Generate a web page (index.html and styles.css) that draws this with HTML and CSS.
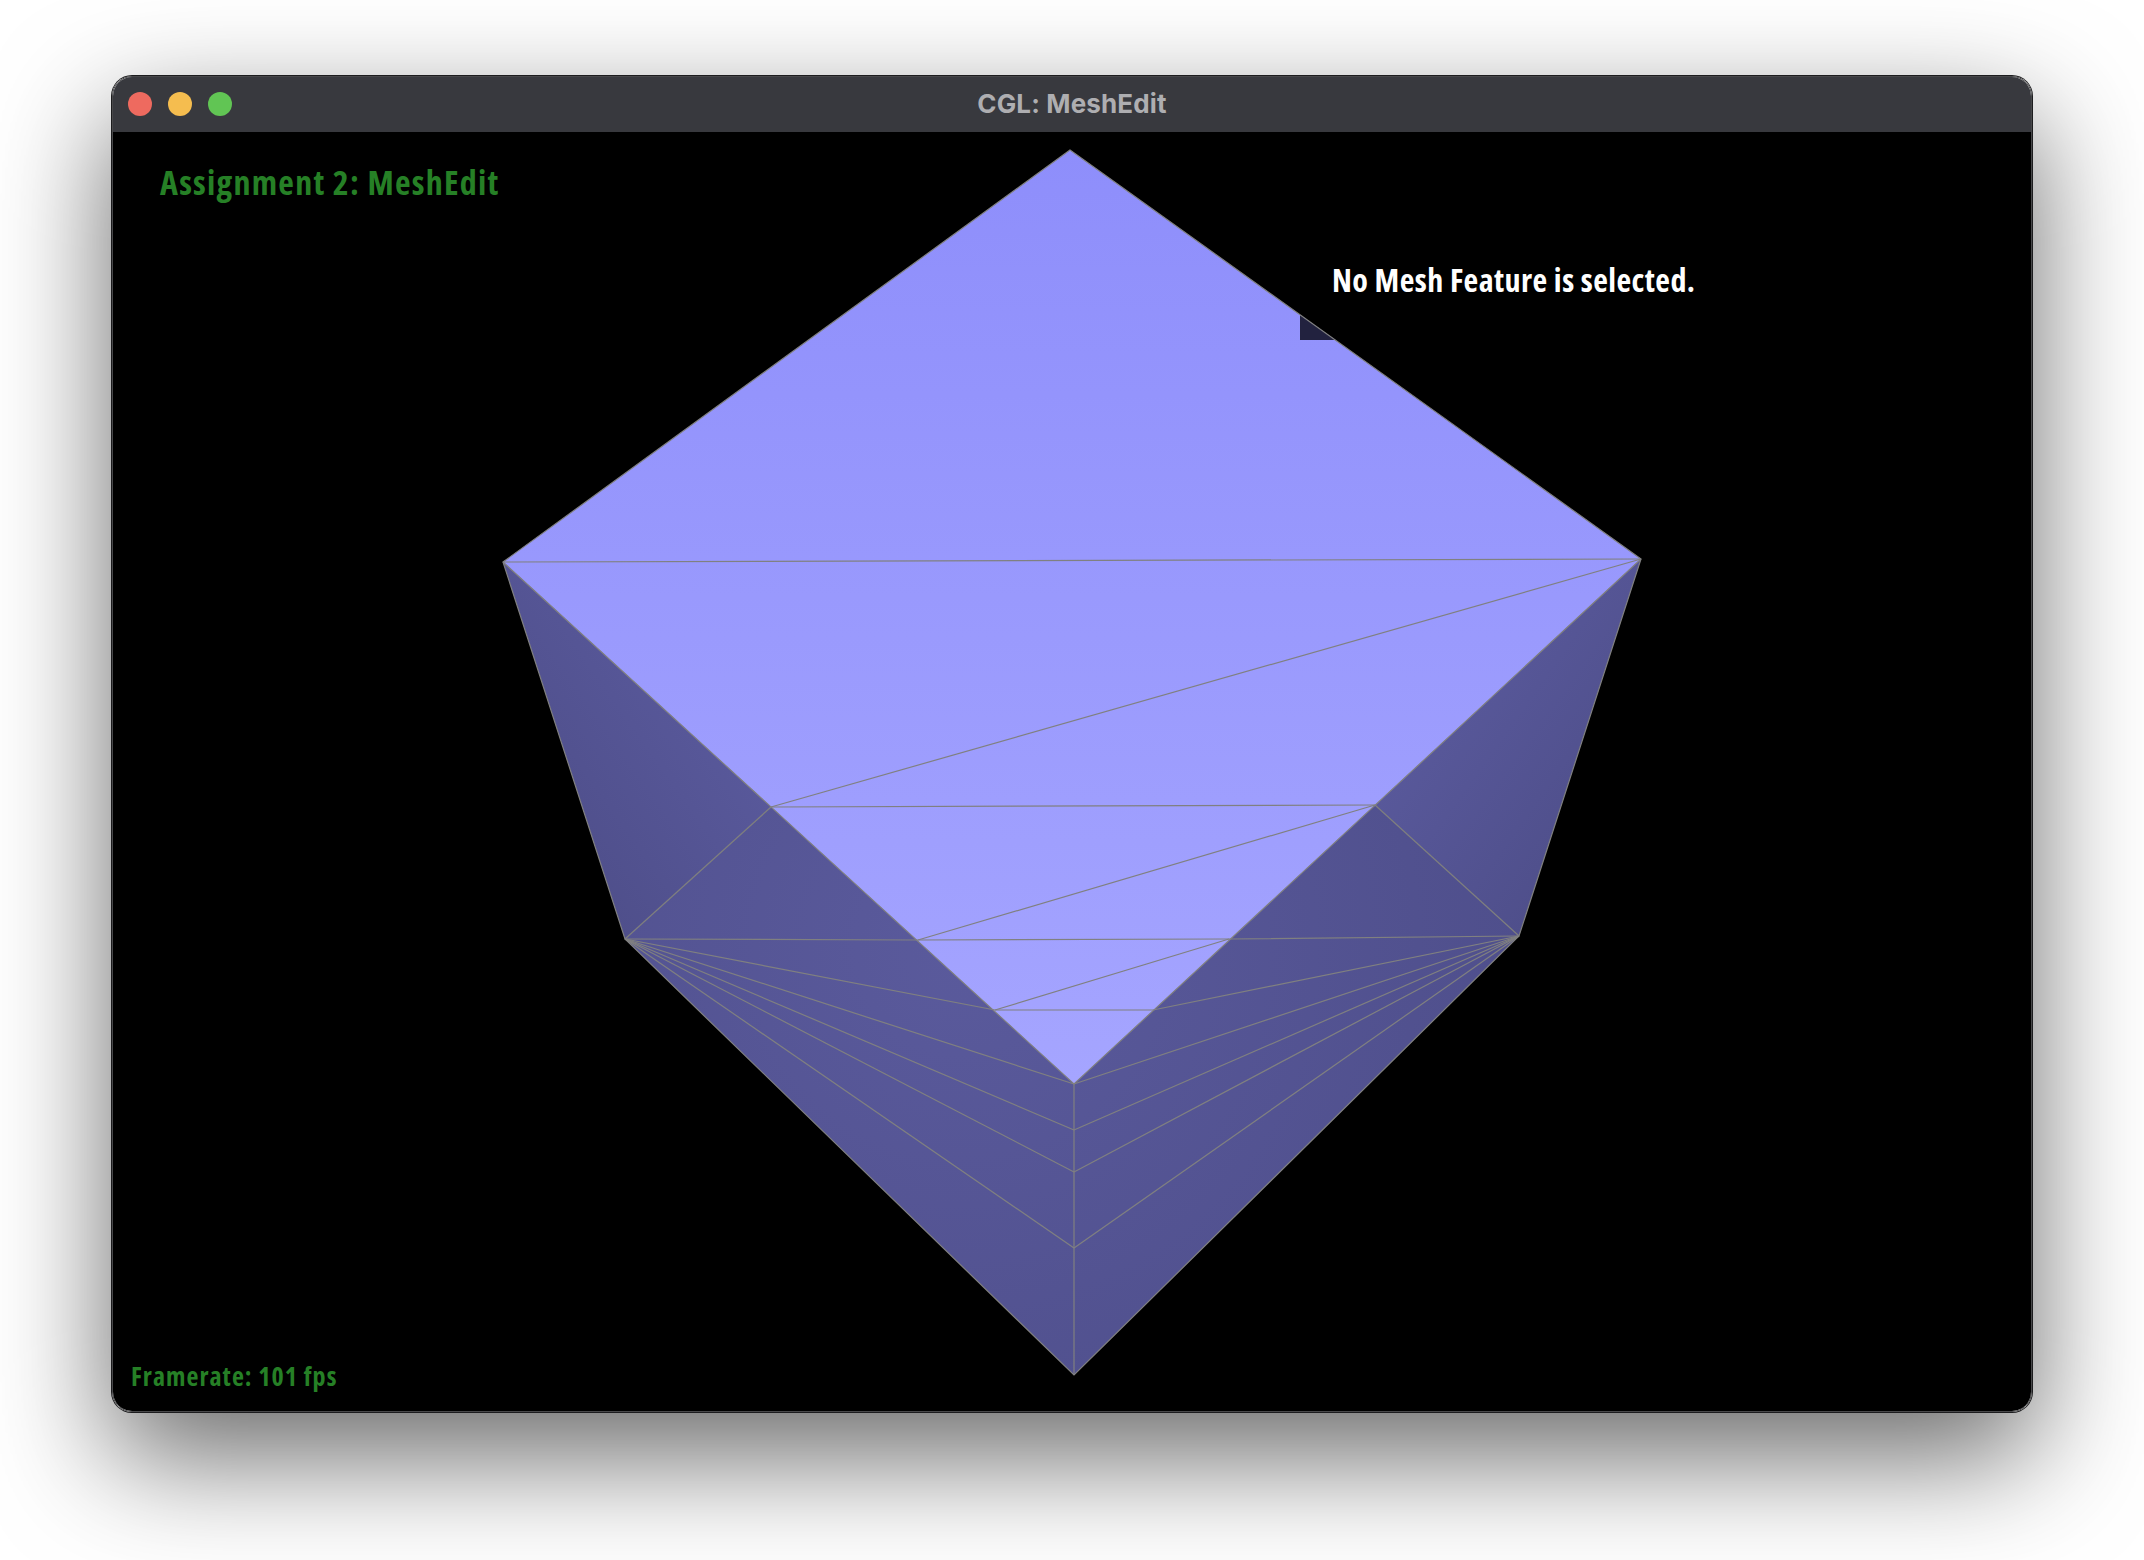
FILE: index.html
```html
<!DOCTYPE html>
<html lang="en">

<head>
    <meta charset="UTF-8">
    <title>CGL: MeshEdit</title>
    <link rel="stylesheet" href="styles.css">
</head>

<body>
    <div class="window">
        <!-- Title bar -->
        <div class="titlebar">
            <div class="lights">
                <span class="light red"></span>
                <span class="light yellow"></span>
                <span class="light green"></span>
            </div>
            <div class="title">CGL: MeshEdit</div>
        </div>

        <!-- GL viewport -->
        <div class="viewport">
            <svg class="mesh" viewBox="113 132 1918 1279" width="1918" height="1279">
                <defs>
                    <linearGradient id="lightFace" gradientUnits="userSpaceOnUse" x1="0" y1="150" x2="0" y2="1084">
                        <stop offset="0" stop-color="#8e8efb"/>
                        <stop offset="1" stop-color="#a5a5ff"/>
                    </linearGradient>
                    <radialGradient id="darkFace" gradientUnits="userSpaceOnUse" cx="960" cy="950" r="560">
                        <stop offset="0" stop-color="#5a5a9c"/>
                        <stop offset="1" stop-color="#4f4f8c"/>
                    </radialGradient>
                    <linearGradient id="leftFace" gradientUnits="userSpaceOnUse" x1="625" y1="939" x2="785" y2="826">
                        <stop offset="0" stop-color="#4f4f8b"/>
                        <stop offset="1" stop-color="#58589a"/>
                    </linearGradient>
                    <linearGradient id="rightFace" gradientUnits="userSpaceOnUse" x1="1519" y1="936" x2="1360" y2="823">
                        <stop offset="0" stop-color="#4f4f8b"/>
                        <stop offset="1" stop-color="#58589a"/>
                    </linearGradient>
                </defs>

                <polygon points="625,939 1074,1375 1519,936 1375,805 1074,1084 771,807" fill="url(#darkFace)"/>
                <polygon points="503,562 625,939 771,807" fill="url(#leftFace)"/>
                <polygon points="1641,559 1519,936 1375,805" fill="url(#rightFace)"/>
                <polygon points="1070,150 1641,559 1074,1084 503,562" fill="url(#lightFace)"/>

                <polygon points="1300,315 1300,340 1336,340" fill="#22223f"/>

                <g class="edges">
                    <polygon points="1070,150 1641,559 1519,936 1074,1375 625,939 503,562"/>
                    <polyline points="503,562 1074,1084 1641,559"/>
                    <line x1="503" y1="562" x2="1641" y2="559"/>
                    <line x1="771" y1="807" x2="1641" y2="559"/>
                    <line x1="771" y1="807" x2="1375" y2="805"/>
                    <line x1="771" y1="807" x2="625" y2="939"/>
                    <line x1="1375" y1="805" x2="1519" y2="936"/>
                    <line x1="1375" y1="805" x2="918" y2="940"/>
                    <polyline points="625,939 918,940 1229,939 1519,936"/>
                    <line x1="1229" y1="939" x2="995" y2="1010"/>
                    <line x1="995" y1="1010" x2="1153" y2="1010"/>
                    <line x1="625" y1="939" x2="995" y2="1010"/>
                    <line x1="1519" y1="936" x2="1153" y2="1010"/>
                    <line x1="625" y1="939" x2="1074" y2="1084"/>
                    <line x1="625" y1="939" x2="1074" y2="1130"/>
                    <line x1="625" y1="939" x2="1074" y2="1172"/>
                    <line x1="625" y1="939" x2="1074" y2="1248"/>
                    <line x1="1519" y1="936" x2="1074" y2="1084"/>
                    <line x1="1519" y1="936" x2="1074" y2="1130"/>
                    <line x1="1519" y1="936" x2="1074" y2="1172"/>
                    <line x1="1519" y1="936" x2="1074" y2="1248"/>
                    <line x1="1074" y1="1084" x2="1074" y2="1375"/>
                </g>
            </svg>

            <div class="label heading">Assignment 2: MeshEdit</div>
            <div class="label info">No Mesh Feature is selected.</div>
            <div class="label framerate">Framerate: 101 fps</div>
        </div>
    </div>
</body>
</html>
```

FILE: styles.css
```css
body {
    margin: 0;
    width: 2144px;
    height: 1560px;
    overflow: hidden;
    background-color: #ffffff;
    padding: 76px 112px 148px 112px;
    box-sizing: border-box;
}

.window {
    display: flex;
    flex-direction: column;
    height: 100%;
    border-radius: 20px;
    overflow: hidden;
    box-sizing: border-box;
    border: 1px solid #48484a;
    box-shadow: 0 0 0 1px #1c1c1e, 0 44px 116px 2px rgba(0, 0, 0, 0.58);
}

.titlebar {
    position: relative;
    display: flex;
    align-items: center;
    justify-content: center;
    height: 55px;
    padding-bottom: 2px;
    box-sizing: border-box;
    flex-shrink: 0;
    background-color: #38393e;
}

.lights {
    position: absolute;
    left: 15px;
    top: 15px;
    display: flex;
    gap: 16px;
}

.light {
    width: 24px;
    height: 24px;
    border-radius: 50%;
}

.red {
    background-color: #ee6a5f;
}

.yellow {
    background-color: #f5bd4f;
}

.green {
    background-color: #61c554;
}

.title {
    font-family: Inter, sans-serif;
    font-weight: 700;
    font-size: 26px;
    letter-spacing: 0.15px;
    color: #aeaeb1;
}

.viewport {
    position: relative;
    flex: 1;
    background-color: #000000;
}

.mesh {
    position: absolute;
    left: 0;
    top: 0;
}

.edges {
    fill: none;
    stroke: #808080;
    stroke-width: 1.2;
}

.label {
    position: absolute;
    font-family: "Open Sans", sans-serif;
    font-weight: 700;
    font-stretch: 75%;
    white-space: nowrap;
    line-height: 1;
}

.heading {
    left: 47px;
    top: 33px;
    font-size: 34px;
    letter-spacing: 1.25px;
    color: #268026;
}

.info {
    left: 1219px;
    top: 132px;
    font-size: 32px;
    letter-spacing: 0.45px;
    color: #ffffff;
}

.framerate {
    left: 18px;
    top: 1231px;
    font-size: 26px;
    letter-spacing: 1.05px;
    color: #268026;
}
```
